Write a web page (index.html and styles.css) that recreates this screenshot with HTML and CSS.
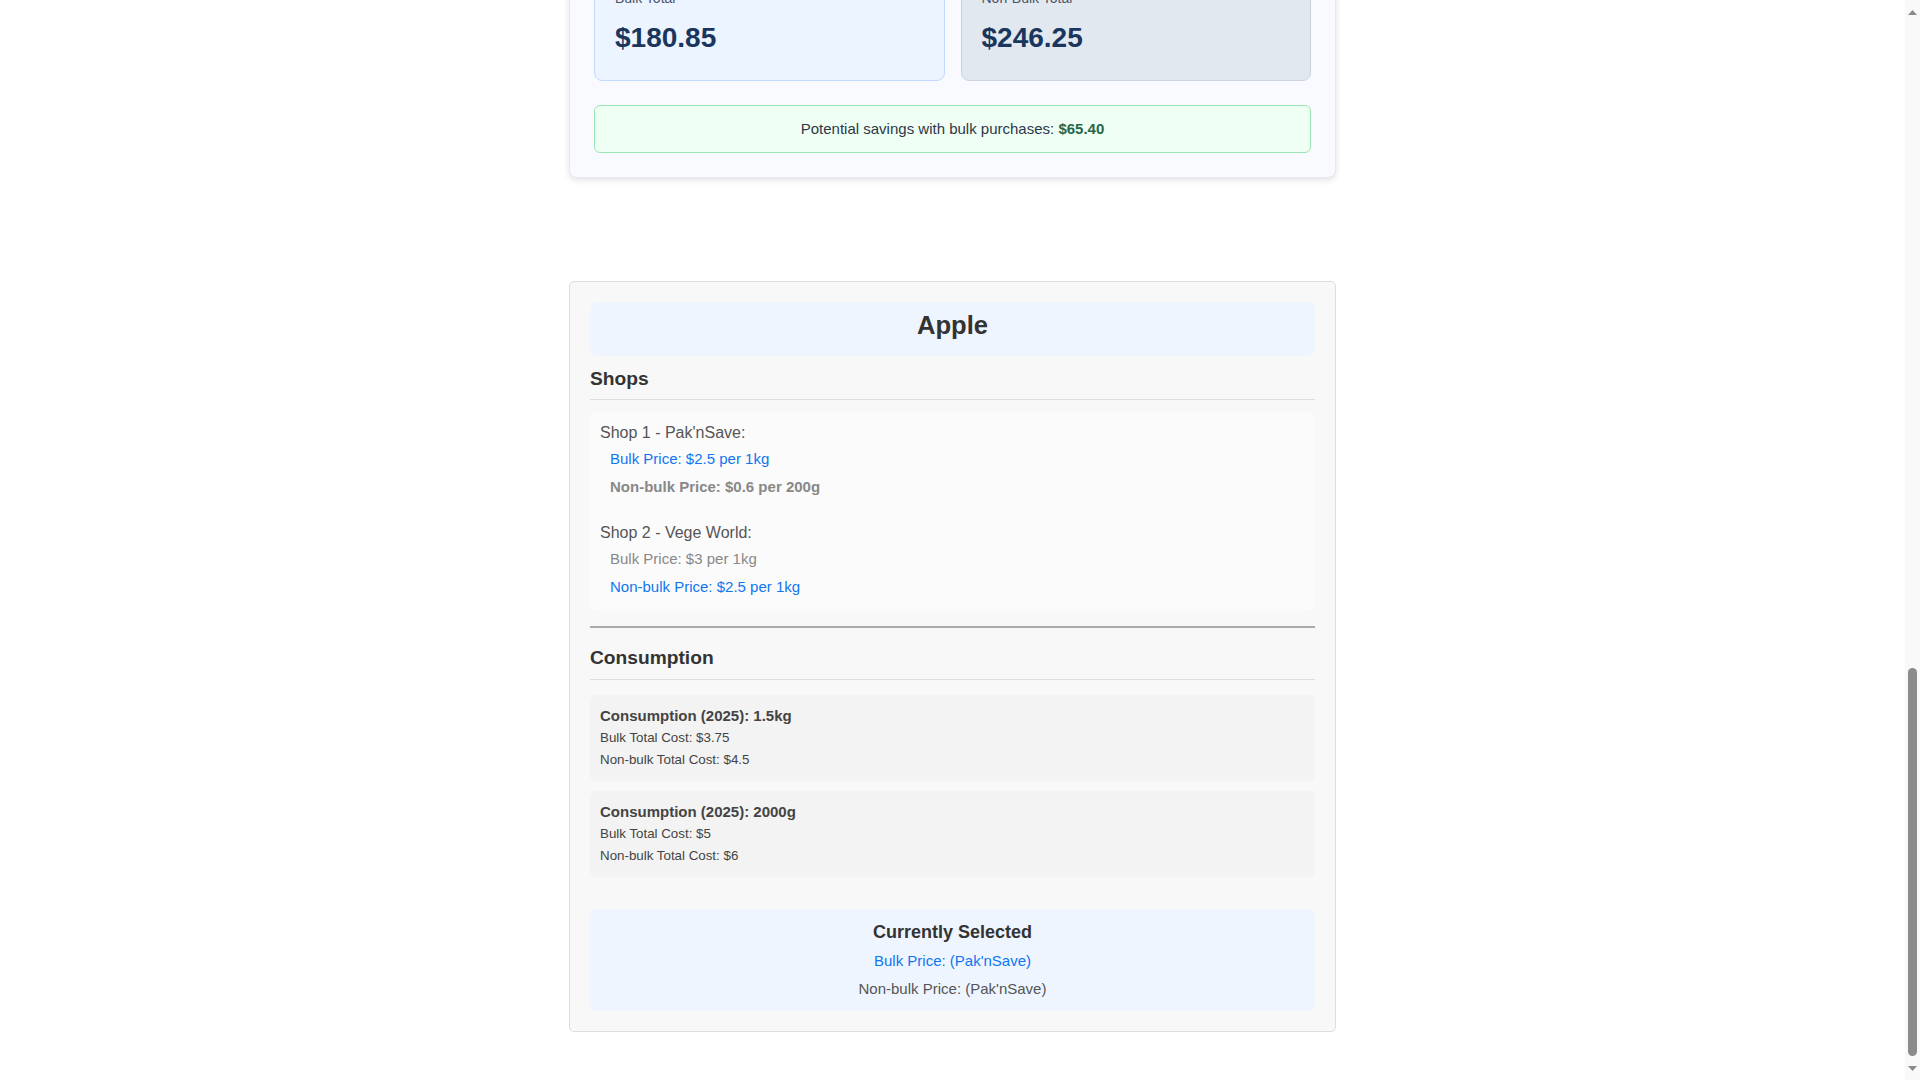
FILE: index.html
```html
<!DOCTYPE html>
<html lang="en">
<head>
<meta charset="utf-8">
<title>Bulk Buying Calculator</title>
<link rel="stylesheet" href="styles.css">
</head>
<body>
<div class="window">
  <div class="viewport">
    <div class="page">
      <main class="container">
        <section class="summary-card">
          <div class="totals">
            <div class="total-box total-bulk">
              <div class="total-label">Bulk Total</div>
              <div class="total-value">$180.85</div>
            </div>
            <div class="total-box total-nonbulk">
              <div class="total-label">Non-Bulk Total</div>
              <div class="total-value">$246.25</div>
            </div>
          </div>
          <div class="savings">Potential savings with bulk purchases: <strong>$65.40</strong></div>
        </section>

        <section class="item-card">
          <div class="item-title-box"><h2 class="item-title">Apple</h2></div>

          <h3 class="section-title section-title-first">Shops</h3>
          <div class="shops">
            <div class="shop">
              <div class="shop-name">Shop 1 - Pak'nSave:</div>
              <div class="price selected">Bulk Price: $2.5 per 1kg</div>
              <div class="price muted strong">Non-bulk Price: $0.6 per 200g</div>
            </div>
            <div class="shop">
              <div class="shop-name">Shop 2 - Vege World:</div>
              <div class="price muted">Bulk Price: $3 per 1kg</div>
              <div class="price selected">Non-bulk Price: $2.5 per 1kg</div>
            </div>
          </div>

          <hr class="divider">

          <h3 class="section-title section-title-spaced">Consumption</h3>
          <div class="consumption">
            <div class="usage">
              <div class="usage-title">Consumption (2025): 1.5kg</div>
              <div class="usage-line">Bulk Total Cost: $3.75</div>
              <div class="usage-line">Non-bulk Total Cost: $4.5</div>
            </div>
            <div class="usage">
              <div class="usage-title">Consumption (2025): 2000g</div>
              <div class="usage-line">Bulk Total Cost: $5</div>
              <div class="usage-line">Non-bulk Total Cost: $6</div>
            </div>
          </div>

          <div class="current">
            <h4 class="current-title">Currently Selected</h4>
            <p class="current-line selected">Bulk Price: (Pak'nSave)</p>
            <p class="current-line">Non-bulk Price: (Pak'nSave)</p>
          </div>
        </section>
      </main>
    </div>
  </div>

  <div class="scrollbar" aria-hidden="true">
    <div class="sb-button">
      <svg width="9" height="5" viewBox="0 0 9 5"><polygon points="0,5 4.5,0 9,5" fill="#8a8a8a"/></svg>
    </div>
    <div class="sb-track">
      <div class="sb-thumb"></div>
    </div>
    <div class="sb-button">
      <svg width="9" height="5" viewBox="0 0 9 5"><polygon points="0,0 9,0 4.5,5" fill="#8a8a8a"/></svg>
    </div>
  </div>
</div>
</body>
</html>
```
FILE: styles.css
```css
html, body {
  margin: 0;
  padding: 0;
  height: 100%;
  overflow: hidden;
  background: #ffffff;
}

body {
  font-family: "Liberation Sans", Arial, sans-serif;
  color: #333333;
}

.window {
  display: flex;
  height: 100vh;
}

.viewport {
  flex: 1;
  min-width: 0;
  overflow: hidden;
  display: flex;
  flex-direction: column-reverse;
  background: #ffffff;
}

/* Browser scrollbar (page is scrolled to the bottom) */
.scrollbar {
  flex: none;
  width: 15px;
  display: flex;
  flex-direction: column;
  background: #f9f9f9;
}

.sb-button {
  flex: none;
  height: 24px;
  display: flex;
  align-items: center;
  justify-content: center;
}

.sb-button svg {
  display: block;
}

.sb-track {
  flex: 1;
  display: flex;
  flex-direction: column;
  justify-content: flex-end;
  align-items: center;
}

.sb-thumb {
  width: 9px;
  height: 388px;
  border-radius: 4.5px;
  background: #8b8b8b;
}

.page {
  flex: none;
  padding: 0 0 48px;
}

.container {
  width: 767px;
  margin: 0 auto;
}

/* Summary card */
.summary-card {
  background: #f8faff;
  border: 1px solid #e4e9f2;
  border-radius: 8px;
  padding: 24px;
  box-shadow: 0 2px 6px rgba(0, 0, 0, 0.12);
}

.totals {
  display: grid;
  grid-template-columns: 1fr 1fr;
  gap: 16px;
}

.total-box {
  border-radius: 8px;
  padding: 20px;
}

.total-bulk {
  background: #ebf4ff;
  border: 1px solid #c3dafe;
}

.total-nonbulk {
  background: #e2e8f0;
  border: 1px solid #cbd5e0;
}

.total-label {
  font-size: 14px;
  line-height: 20px;
  color: #4a5568;
  margin-bottom: 13px;
}

.total-value {
  font-size: 28px;
  line-height: 34px;
  font-weight: bold;
  color: #1a365d;
  margin-bottom: 5px;
}

.savings {
  margin-top: 24px;
  padding: 14px;
  background: #f0fff4;
  border: 1px solid #9ae6b4;
  border-radius: 6px;
  text-align: center;
  font-size: 15px;
  line-height: 18px;
  color: #2d3748;
}

.savings strong {
  color: #276749;
}

/* Item card */
.item-card {
  margin-top: 103px;
  background: #f8f8f8;
  border: 1px solid #dddddd;
  border-radius: 5px;
  padding: 20px;
}

.item-title-box {
  background: #eef5ff;
  border-radius: 8px;
  padding: 8px 10px 16px;
}

.item-title {
  margin: 0;
  text-align: center;
  font-size: 25.6px;
  line-height: 30px;
  font-weight: bold;
  color: #333333;
}

.section-title {
  margin: 12px 0 12px;
  padding-bottom: 10px;
  border-bottom: 1px solid #dddddd;
  font-size: 19.2px;
  line-height: 22px;
  font-weight: bold;
  color: #333333;
}

.section-title-first {
  padding-bottom: 9px;
}

.section-title-spaced {
  margin-top: 19px;
  margin-bottom: 15px;
}

.shops {
  background: #fbfbfb;
  border-radius: 6px;
  padding: 11px 10px 10px;
}

.shop {
  margin-bottom: 22px;
}

.shop:last-child {
  margin-bottom: 0;
}

.shop-name {
  font-size: 16px;
  line-height: 20px;
  color: #555555;
  margin-bottom: 2px;
}

.price {
  margin-left: 10px;
  padding: 5px 0;
  font-size: 15px;
  line-height: 18px;
}

.selected {
  color: #0f76f0;
}

.muted {
  color: #888888;
}

.strong {
  font-weight: bold;
}

.divider {
  margin: 15px 0 0;
  border: 0;
  border-top: 2px solid #aaaaaa;
  height: 0;
}

.consumption {
  display: flex;
  flex-direction: column;
  gap: 10px;
}

.usage {
  background: #f3f3f3;
  border-radius: 6px;
  padding: 10px;
  color: #444444;
}

.usage-title {
  font-size: 15px;
  line-height: 22px;
  font-weight: bold;
}

.usage-line {
  font-size: 13.33px;
  line-height: 22px;
}

.current {
  margin-top: 32px;
  background: #eef5ff;
  border-radius: 8px;
  padding: 12px 12px 13px;
  text-align: center;
}

.current-title {
  margin: 0 0 9px;
  font-size: 18px;
  line-height: 22px;
  font-weight: bold;
  color: #333333;
}

.current-line {
  margin: 0;
  font-size: 15px;
  line-height: 18px;
  color: #555555;
}

.current-line + .current-line {
  margin-top: 10px;
}

.current-line.selected {
  color: #0f76f0;
}
```
